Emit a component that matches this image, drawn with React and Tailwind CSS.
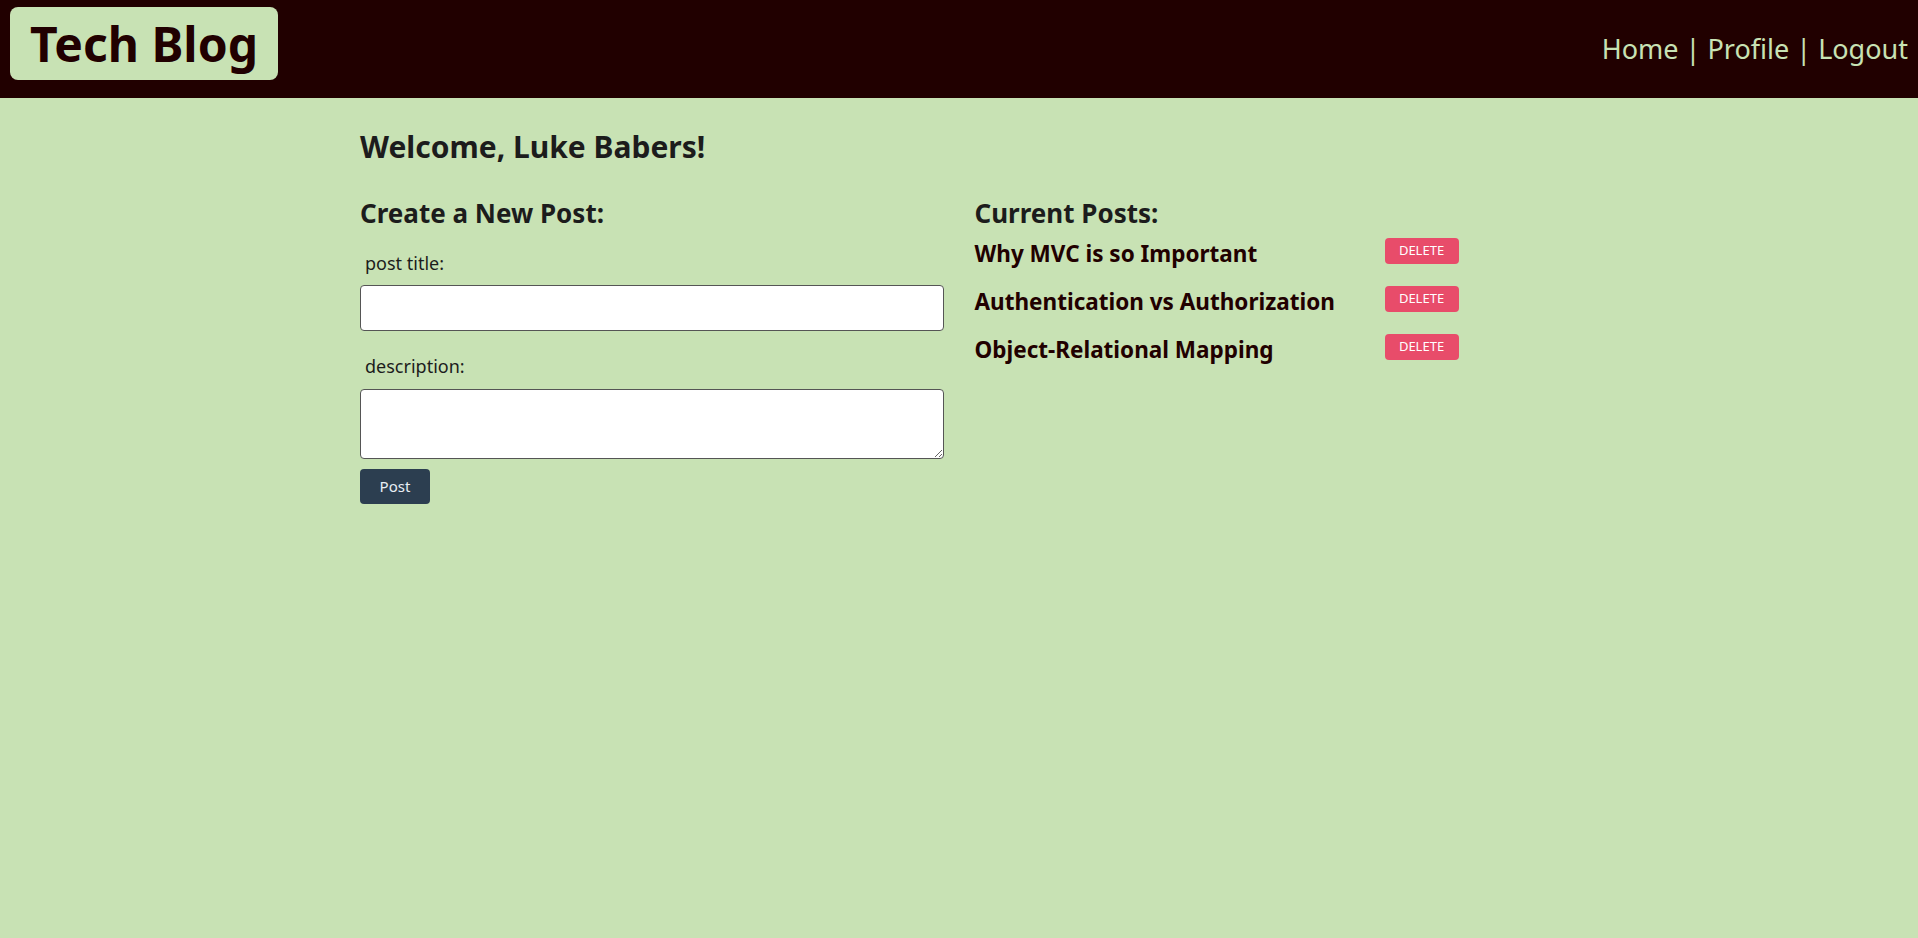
import React from 'react';

const posts = [
    'Why MVC is so Important',
    'Authentication vs Authorization',
    'Object-Relational Mapping',
];

const App = () => {
    return (
        <div className="min-h-screen bg-[#c8e2b4] text-[#1c1c1c]" style={{ fontFamily: '"Noto Sans", sans-serif' }}>
            {/* Header */}
            <header className="h-[98px] bg-[#210000] flex justify-between items-start px-[10px]">
                <a className="mt-[7px] h-[73px] w-[268px] rounded-lg bg-[#c8e2b4] flex items-center justify-center text-[#210000] text-[48px] font-bold leading-none">
                    Tech Blog
                </a>
                <nav className="mt-[31px] text-[#c8e2b4] text-[27px] leading-[36px]">
                    <a>Home</a> | <a>Profile</a> | <a>Logout</a>
                </nav>
            </header>

            <main className="w-[1198px] mx-auto pt-[29px]">
                <h2 className="text-[30px] font-bold leading-[40px]">Welcome, Luke Babers!</h2>

                <div className="grid grid-cols-2 gap-[31px] mt-[29px]">
                    {/* Create form */}
                    <form className="flex flex-col">
                        <h3 className="text-[26px] font-bold leading-[34px]">Create a New Post:</h3>
                        <label className="mt-[20px] pl-[5px] text-[18px] leading-[26px]">post title:</label>
                        <input type="text" className="mt-[9px] h-[46px] bg-white border border-[#555] rounded-[4px] px-2" />
                        <label className="mt-[22px] pl-[5px] text-[18px] leading-[26px]">description:</label>
                        <textarea className="mt-[10px] h-[70px] bg-white border border-[#555] rounded-[4px] px-2" />
                        <button type="button" className="mt-[10px] w-[70px] h-[35px] rounded-[4px] bg-[#2c3e50] text-[#e8eef4] text-[15px]">
                            Post
                        </button>
                    </form>

                    {/* Current posts */}
                    <section>
                        <h3 className="text-[26px] font-bold leading-[34px]">Current Posts:</h3>
                        <ul className="w-[484px] flex flex-col -mt-[3px]">
                            {posts.map(title => (
                                <li key={title} className="h-[48px] flex justify-between items-center">
                                    <span className="pt-[6px] text-[22.5px] font-bold text-[#210000]">{title}</span>
                                    <button type="button" className="w-[74px] h-[26px] rounded-[4px] bg-[#e84c6a] text-white text-[13px]">
                                        DELETE
                                    </button>
                                </li>
                            ))}
                        </ul>
                    </section>
                </div>
            </main>
        </div>
    );
};

export default App;
